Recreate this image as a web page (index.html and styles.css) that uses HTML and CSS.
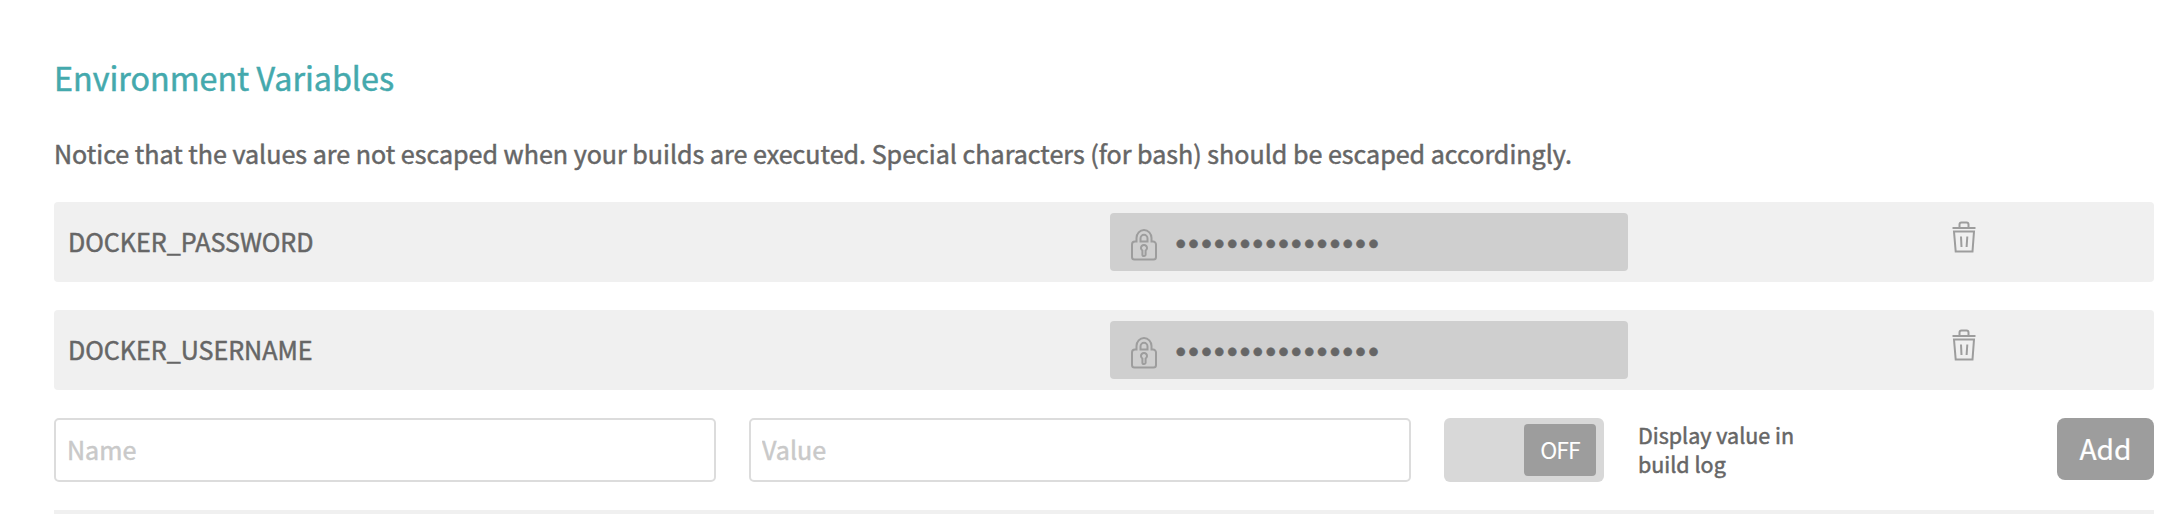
FILE: index.html
```html
<!DOCTYPE html>
<html lang="en">
<head>
<meta charset="utf-8">
<title>Environment Variables</title>
<link rel="stylesheet" href="styles.css">
</head>
<body>
<svg class="sprite" aria-hidden="true">
  <symbol id="lock" viewBox="0 0 26 32">
    <path d="M5.5 12.500V9a7.500 8 0 0 1 15 0v3.500h1.500a3 3 0 0 1 3 3v12.500a2.500 2.500 0 0 1-2.500 2.500h-19A2.500 2.500 0 0 1 1 28V15.500a3 3 0 0 1 3-3z"/>
    <path d="M9.500 12.500V9.500a3.500 3.700 0 0 1 7 0v3z"/>
    <path d="M11.400 21.500a3 3 0 1 1 3.200 0v4a1.600 1.600 0 0 1-3.200 0z"/>
  </symbol>
  <symbol id="trash" viewBox="0 0 24 32">
    <path d="M.5 7h23M7.500 7V3.500q0-2 2-2h5q2 0 2 2V7M2 10.500h20l-1.500 20H3.700zM9 15.500l.5 10.500M15.300 15.500l-.7 10.500"/>
  </symbol>
</svg>
<main class="settings">
  <h2 class="title">Environment Variables</h2>
  <p class="notice">Notice that the values are not escaped when your builds are executed. Special characters (for bash) should be escaped accordingly.</p>
  <ul class="variables">
    <li class="variable">
      <span class="variable-name">DOCKER_PASSWORD</span>
      <span class="secret"><svg class="lock"><use href="#lock"/></svg><span class="dots">••••••••••••••••</span></span>
      <svg class="trash"><use href="#trash"/></svg>
    </li>
    <li class="variable">
      <span class="variable-name">DOCKER_USERNAME</span>
      <span class="secret"><svg class="lock"><use href="#lock"/></svg><span class="dots">••••••••••••••••</span></span>
      <svg class="trash"><use href="#trash"/></svg>
    </li>
  </ul>
  <form class="add-form">
    <input class="field" type="text" placeholder="Name">
    <input class="field" type="text" placeholder="Value">
    <span class="toggle"><span class="thumb">OFF</span></span>
    <span class="toggle-label">Display value in build log</span>
    <button class="add" type="button">Add</button>
  </form>
</main>
</body>
</html>
```
FILE: styles.css
```css
* { box-sizing: border-box; }

body {
  margin: 0;
  background: #fff;
  color: #666;
  font-family: "Noto Sans CJK SC", "Noto Sans", sans-serif;
  font-size: 25.07px;
  -webkit-text-stroke: 0.5px currentColor;
}

.sprite { display: none; }

.settings { padding: 53px 18px 0 54px; }

.title {
  margin: 0 0 32px;
  color: #44a9ad;
  font-size: 32.25px;
  font-weight: 400;
  line-height: 48px;
}

.notice { margin: 0 0 29px; line-height: 40px; white-space: nowrap; }

.variables {
  display: grid;
  gap: 28px;
  margin: 0 0 28px;
  padding: 0;
  list-style: none;
}

.variable {
  display: grid;
  grid-template-columns: 1042px 518px 1fr;
  align-items: center;
  height: 80px;
  padding-left: 14px;
  border-radius: 4px;
  background: #f0f0f0;
}

.variable-name { padding-bottom: 2px; line-height: 40px; }

.secret {
  display: flex;
  align-items: center;
  height: 58px;
  padding-left: 21px;
  border-radius: 4px;
  background: #cfcfcf;
}

.lock, .trash { fill: none; stroke: #9d9d9d; stroke-width: 2; }
.lock { width: 26px; height: 32px; margin: 5px 15.5px 0 0; }
.dots {
  padding-top: 5px;
  font-family: "DejaVu Sans", sans-serif;
  font-size: 28px;
  line-height: 30px;
  letter-spacing: -3.67px;
}
.trash { align-self: start; width: 24px; height: 32px; margin: 19px 0 0 323.5px; }

.add-form { display: flex; height: 96px; border-bottom: 4px solid #f0f0f0; }

.field {
  width: 662px;
  height: 64px;
  margin-right: 33px;
  padding: 0 11px 2px;
  border: 2px solid #dcdcdc;
  border-radius: 5px;
  background: #fff;
  font: inherit;
}

.field::placeholder { color: #c9c9c9; opacity: 1; }

.toggle {
  display: flex;
  justify-content: flex-end;
  width: 160px;
  height: 64px;
  padding: 6px 8px;
  border-radius: 6px;
  background: #d8d8d8;
}

.thumb {
  width: 72px;
  height: 52px;
  border-radius: 4px;
  background: #9d9d9d;
  color: #fff;
  font-size: 23px;
  line-height: 50px;
  letter-spacing: -1px;
  text-align: center;
  -webkit-text-stroke: 0;
}

.toggle-label { width: 180px; margin: 2px 0 0 34px; font-size: 21.5px; line-height: 29px; }

.add {
  width: 97px;
  height: 62px;
  margin-left: auto;
  padding: 0 0 2px;
  border: 0;
  border-radius: 8px;
  background: #9d9d9d;
  color: #fff;
  font: inherit;
  font-size: 28.2px;
  line-height: 60px;
  -webkit-text-stroke: 0.2px #fff;
}
```
